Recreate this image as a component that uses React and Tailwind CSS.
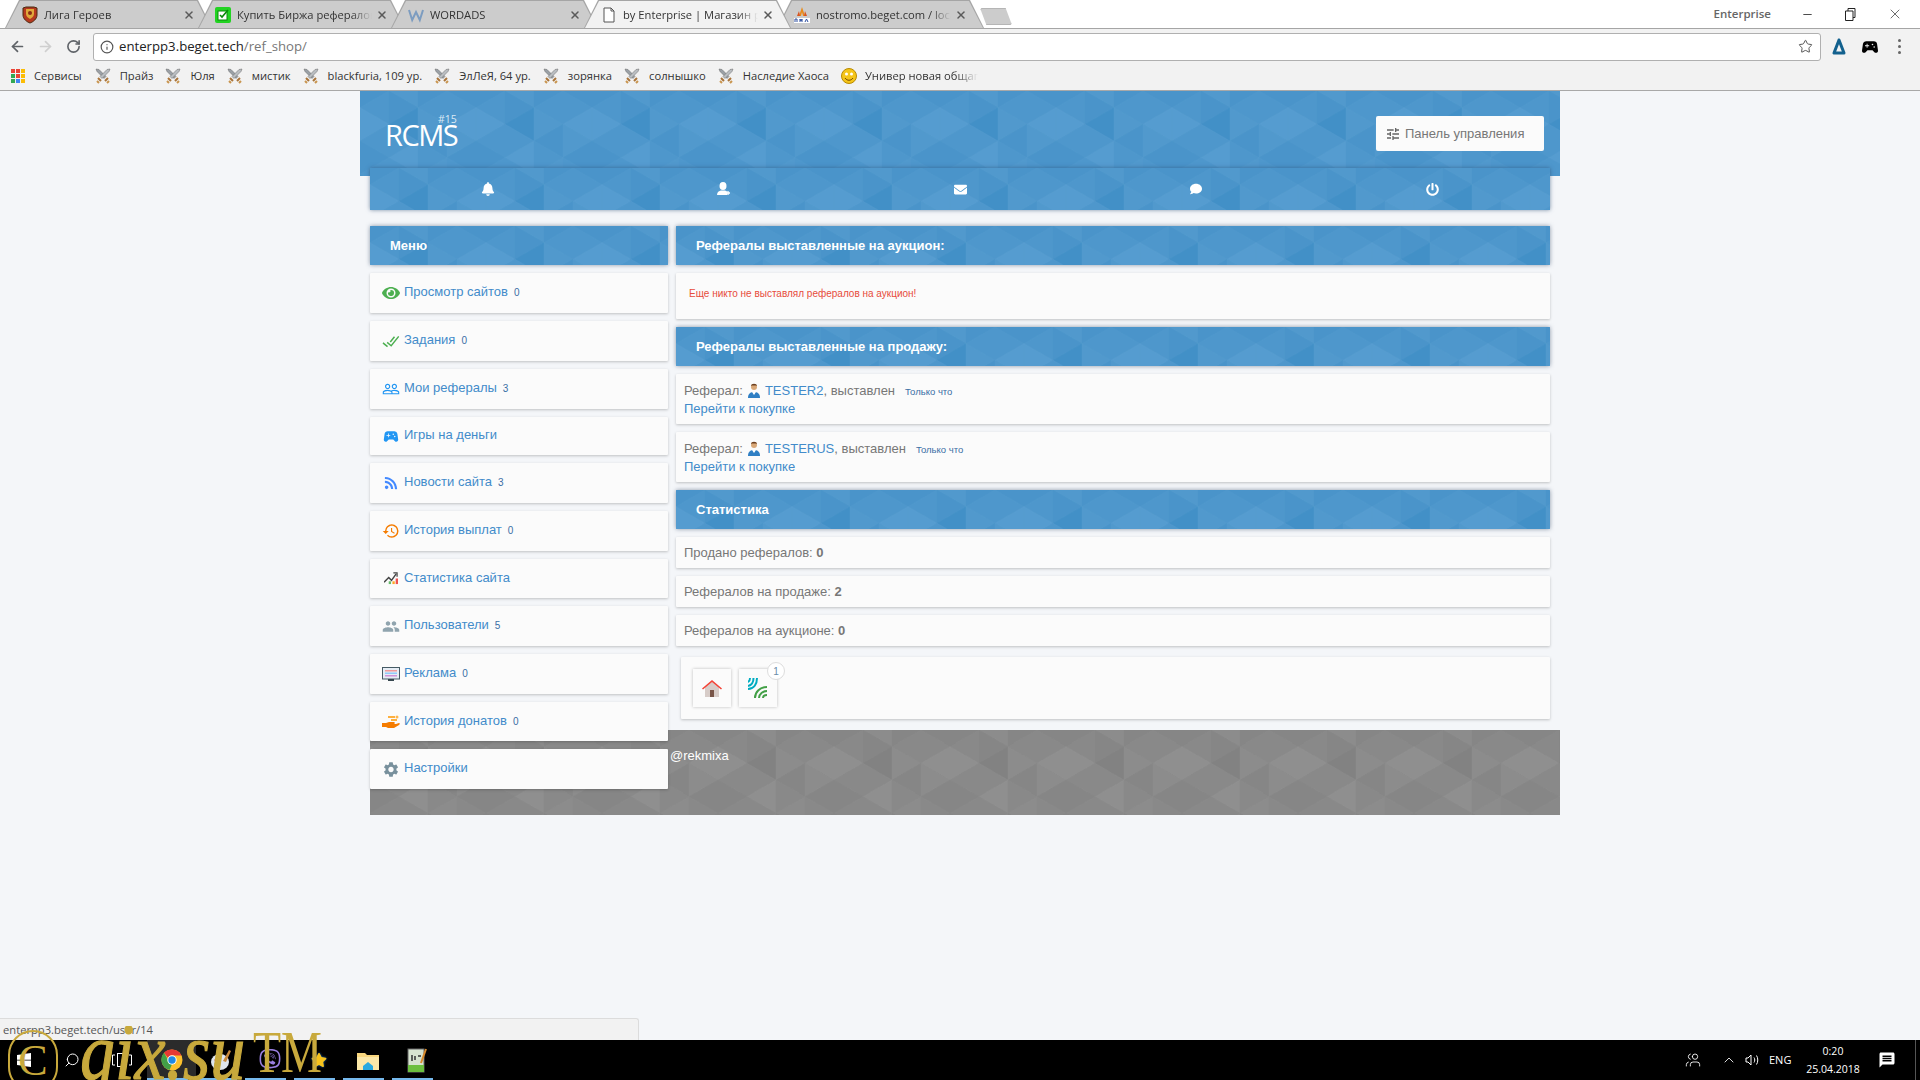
import React, { useId } from "react";
import { FaBell, FaEnvelope, FaComment, FaPowerOff, FaEye, FaRss, FaWindows, FaViber, FaStar } from "react-icons/fa";
import { MdHistory, MdPeople, MdPeopleOutline, MdTune, MdSettings, MdDoneAll, MdMessage, MdSportsEsports } from "react-icons/md";
import { ArrowLeft, ArrowRight, RotateCw, Info, Star, X, Minus, Search, ChevronUp, Users } from "lucide-react";

const TONES = {
  blue: ["#4290c7", "#4a94ca", "#4e97cc", "#5199cd", "#559cd0"],
  gray: ["#828282", "#868686", "#898989", "#8c8c8c", "#8f8f8f"],
};
const TABLE = [
  [1, 2, 4, 2, 1, 2],
  [3, 1, 0, 2, 4, 2],
  [1, 2, 3, 1, 2, 3],
  [1, 2, 4, 3, 1, 2],
];
const CW = 29;
const RH = 100 / 6;

function triangles(tone) {
  const out = [];
  for (let c = 0; c < 4; c++) {
    for (let m = 0; m <= 6; m++) {
      const s = TONES[tone][TABLE[c][m % 6]];
      const x0 = c * CW;
      const x1 = (c + 1) * CW;
      const pts = (c + m) % 2 === 1
        ? `${x0},${m * RH} ${x1},${(m - 1) * RH} ${x1},${(m + 1) * RH}`
        : `${x1},${m * RH} ${x0},${(m - 1) * RH} ${x0},${(m + 1) * RH}`;
      out.push(<polygon key={`${c}-${m}`} points={pts} fill={s} stroke={s} strokeWidth="0.4" />);
    }
  }
  return out;
}

function Pattern({ tone }) {
  const id = "p" + useId().replace(/[^a-zA-Z0-9]/g, "");
  return (
    <svg className="absolute inset-0 w-full h-full" aria-hidden="true">
      <defs>
        <pattern id={id} width="116" height="100" patternUnits="userSpaceOnUse">{triangles(tone)}</pattern>
      </defs>
      <rect width="100%" height="100%" fill={`url(#${id})`} />
    </svg>
  );
}

function BluePanel({ title }) {
  return (
    <div className="relative overflow-hidden h-[39px] shrink-0 bg-[#4d96cb] rounded-[1px] shadow-[0_0_4px_rgba(50,70,100,0.55)] flex items-center">
      <Pattern tone="blue" />
      <span className="relative pl-[20px] text-[13px] font-bold text-white">{title}</span>
    </div>
  );
}

const Card = ({ className = "", children }) => (
  <div className={`shrink-0 bg-[#fbfbfb] rounded-[1px] shadow-[0_1px_3px_rgba(0,0,0,0.22)] ${className}`}>{children}</div>
);

function Sword() {
  return (
    <svg width="16" height="16" viewBox="0 0 16 16" className="shrink-0">
      <path d="M1 1l3 .5 7 7-2 2-7-7z" fill="#9aa0a6" stroke="#666" strokeWidth=".5" />
      <path d="M15 1l-3 .5-7 7 2 2 7-7z" fill="#b9bdc1" stroke="#666" strokeWidth=".5" />
      <path d="M3 10l3 3M13 10l-3 3" stroke="#a9743a" strokeWidth="2" />
      <path d="M2 13l2 2M14 13l-2 2" stroke="#c9954f" strokeWidth="2" />
    </svg>
  );
}

function Apps() {
  const c = ["#ea4335", "#ea4335", "#fbbc05", "#34a853", "#ea4335", "#fbbc05", "#34a853", "#4285f4", "#fbbc05"];
  return (
    <svg width="14" height="14" viewBox="0 0 14 14" className="shrink-0">
      {c.map((f, i) => <rect key={i} x={(i % 3) * 5} y={Math.floor(i / 3) * 5} width="4" height="4" fill={f} />)}
    </svg>
  );
}

const Shield = () => (
  <svg width="16" height="18" viewBox="0 0 16 18"><path d="M1 2l3-1h8l3 1v7c0 4-4 7-7 8-3-1-7-4-7-8z" fill="#b5391f" stroke="#4a2a10" /><path d="M4 3h8v5c0 2-2 4-4 5-2-1-4-3-4-5z" fill="#e0a93a" /><circle cx="8" cy="7" r="2" fill="#8a2b14" /></svg>
);
const GreenCheck = () => (
  <svg width="16" height="16" viewBox="0 0 16 16"><rect width="16" height="16" rx="2" fill="#22d322" /><rect x="3" y="4" width="9" height="9" fill="#fff" stroke="#0a8a0a" /><path d="M5 8l2 2 6-7" stroke="#0a8a0a" strokeWidth="1.6" fill="none" /></svg>
);
const WLogo = () => (
  <svg width="16" height="16" viewBox="0 0 16 16"><path d="M1 3l3.2 10L8 5l3.8 8L15 3" stroke="#7c9cc0" strokeWidth="2" fill="none" /></svg>
);
const PageIcon = () => (
  <svg width="14" height="16" viewBox="0 0 14 16"><path d="M2 1h7l3 3v11H2z" fill="#fff" stroke="#555" /><path d="M9 1v3h3" fill="none" stroke="#555" /></svg>
);
const Rma = () => (
  <svg width="16" height="16" viewBox="0 0 16 16"><path d="M8 0l3 9H9L8 5 7 9H5z" fill="#e88a1a" /><path d="M3 9l2-5 1 5zM13 9l-2-5-1 5z" fill="#d9541e" /><rect x="0" y="11" width="16" height="5" fill="#fff" /><path d="M1 15v-3h2v3M6 15v-3l1 2 1-2v3M11 15l1.5-3 1.5 3" stroke="#2d4ea0" fill="none" /></svg>
);

function Tab({ icon, title, active, first }) {
  return (
    <div className={`relative h-[28px] w-[207px] ${first ? "" : "-ml-[14px]"} ${active ? "z-10" : ""}`}>
      <div className="absolute inset-0 bg-[#a5a5a5] [clip-path:polygon(0_100%,14px_0,calc(100%-14px)_0,100%_100%)]" />
      <div className={`absolute left-[1px] right-[1px] top-[1px] bottom-0 ${active ? "bg-[#f2f2f2]" : "bg-[#cccccc]"} [clip-path:polygon(0_100%,14px_0,calc(100%-14px)_0,100%_100%)]`} />
      <div className="relative h-full flex items-center pt-[2px] pl-[17px] pr-[17px]">
        <span className="w-[16px] flex justify-center shrink-0">{icon}</span>
        <span className="ml-[6px] flex-1 overflow-hidden whitespace-nowrap text-[11.200px] text-[#333] [mask-image:linear-gradient(to_right,black_85%,transparent)]">{title}</span>
        <X size={12} strokeWidth={3} className="ml-[4px] text-[#5a5a5a] shrink-0" />
      </div>
    </div>
  );
}

const BOOKMARKS = ["Прайз", "Юля", "мистик", "blackfuria, 109 ур.", "ЭлЛеЯ, 64 ур.", "зорянка", "солнышко", "Наследие Хаоса"];

function Chrome() {
  return (
    <div className="h-[91px] shrink-0 flex flex-col font-['Open_Sans',sans-serif]">
      <div className="h-[29px] bg-white border-b border-[#a5a5a5] flex items-start pl-[5px] relative">
        <div className="flex h-[28px]">
          <Tab first icon={<Shield />} title="Лига Героев" />
          <Tab icon={<GreenCheck />} title="Купить Биржа рефералов" />
          <Tab icon={<WLogo />} title="WORDADS" />
          <Tab active icon={<PageIcon />} title="by Enterprise | Магазин рефералов" />
          <Tab icon={<Rma />} title="nostromo.beget.com / localhost" />
          <div className="-ml-[4px] mt-[8px] w-[32px] h-[17px] bg-[#cccccc] border border-[#b5b5b5] rounded-[2px] [clip-path:polygon(0_0,80%_0,100%_100%,20%_100%)]" />
        </div>
        <div className="ml-auto flex items-center h-[28px] text-[#222]">
          <span className="text-[11.500px] text-[#666] font-semibold mr-[30px]">Enterprise</span>
          <Minus size={13} strokeWidth={1.5} className="mr-[31px]" />
          <svg width="11" height="13" viewBox="0 0 11 13" className="mr-[31px]"><path d="M3 3V.5h7v9H8M.5 3h7.5v9.500H.500z" fill="none" stroke="#222" /></svg>
          <X size={16} strokeWidth={1} className="mr-[17px]" />
        </div>
      </div>
      <div className="h-[33px] pt-[2px] bg-[#f2f2f2] flex items-center pl-[9px]">
        <ArrowLeft size={17} strokeWidth={2.4} className="text-[#5f6368]" />
        <ArrowRight size={17} strokeWidth={2.4} className="ml-[11px] text-[#cfcfcf]" />
        <RotateCw size={15} strokeWidth={2.6} className="ml-[12px] text-[#5f6368]" />
        <div className="ml-[12px] w-[1728px] h-[28px] bg-white border border-[#b0b0b0] rounded-[3px] flex items-center pl-[6px] pr-[7px]">
          <Info size={14} strokeWidth={2} className="text-[#555]" />
          <span className="ml-[5px] text-[13.200px] text-[#222]">enterpp3.beget.tech<span className="text-[#777]">/ref_shop/</span></span>
          <Star size={15} strokeWidth={1.6} className="ml-auto text-[#555]" />
        </div>
        <svg width="14" height="18" viewBox="0 0 14 18" className="ml-[11px]"><path d="M7 2L2 15h10z" fill="none" stroke="#13618e" strokeWidth="3" strokeLinejoin="round" /></svg>
        <MdSportsEsports size={20} className="ml-[14px] text-black" />
        <div className="ml-[18px] flex flex-col gap-[3px]">
          <span className="w-[3px] h-[3px] bg-[#666] rounded-full" />
          <span className="w-[3px] h-[3px] bg-[#666] rounded-full" />
          <span className="w-[3px] h-[3px] bg-[#666] rounded-full" />
        </div>
      </div>
      <div className="h-[29px] bg-[#f2f2f2] border-b border-[#a8a8a8] flex items-center pl-[11px] text-[11.200px] text-[#333]">
        <Apps />
        <span className="ml-[9px] mr-[13px]">Сервисы</span>
        {BOOKMARKS.map((t) => (
          <React.Fragment key={t}>
            <Sword />
            <span className="ml-[9px] mr-[12px] whitespace-nowrap">{t}</span>
          </React.Fragment>
        ))}
        <svg width="16" height="16" viewBox="0 0 16 16" className="shrink-0"><circle cx="8" cy="8" r="7.500" fill="#f5c518" stroke="#b88a00" /><circle cx="5.500" cy="6" r="1.500" fill="#fff" /><circle cx="10.500" cy="6" r="1.500" fill="#fff" /><path d="M4 10c2 3 6 3 8 0" stroke="#7a4a00" fill="none" /></svg>
        <span className="ml-[8px] w-[113px] overflow-hidden whitespace-nowrap [mask-image:linear-gradient(to_right,black_80%,transparent)]">Универ новая общага</span>
      </div>
    </div>
  );
}

const UserPlus = () => (
  <svg width="14" height="14" viewBox="0 0 14 14" fill="#fff"><ellipse cx="6" cy="4" rx="3.500" ry="4" /><path d="M0 13c0-3 2-4 4-4.500h4c1 .2 1.500.5 2 1V13z" /><path d="M11 9v4M9 11h4" stroke="#fff" strokeWidth="1.300" /></svg>
);

const Monitor = () => (
  <svg width="18" height="15" viewBox="0 0 18 15"><rect x=".5" y=".5" width="17" height="11.500" fill="#e6edf5" stroke="#455a64" /><rect x="3" y="3" width="12" height="1.500" fill="#ef9a9a" /><rect x="3" y="5.500" width="12" height="1.500" fill="#90caf9" /><rect x="3" y="8" width="12" height="1.500" fill="#ce93d8" /><rect x="6" y="12" width="6" height="2" fill="#37474f" /></svg>
);
const Donate = () => (
  <svg width="18" height="16" viewBox="0 0 18 16"><path d="M0 9h4l3-1h5c1 0 1 2 0 2H9h5l3-1c1 0 1 1 0 2l-5 3H6l-2-1H0z" fill="#f57c00" /><path d="M6 3h7M9 6h6" stroke="#ff9800" strokeWidth="1.500" /><circle cx="15" cy="3" r="1.500" fill="#ffb74d" /></svg>
);
const StatIcon = () => (
  <svg width="15" height="13" viewBox="0 0 16 14"><path d="M0 11l5-5 3 3 5-7" stroke="#444" strokeWidth="1.500" fill="none" /><path d="M10 1h4v4" stroke="#444" strokeWidth="1.300" fill="none" /><rect x="5" y="10" width="2.500" height="3" fill="#66bb6a" /><rect x="9" y="10" width="2.500" height="3" fill="#ffa726" /><rect x="12.500" y="7" width="2.500" height="6" fill="#ef5350" /></svg>
);

const MENU = [
  { t: "Просмотр сайтов", n: "0", h: "h-[40px]", icon: <FaEye size={18} className="text-[#4caf50]" /> },
  { t: "Задания", n: "0", h: "h-[40px]", icon: <MdDoneAll size={19} className="text-[#4caf50] -rotate-6" /> },
  { t: "Мои рефералы", n: "3", h: "h-[40px]", icon: <MdPeopleOutline size={20} className="text-[#2196f3]" /> },
  { t: "Игры на деньги", n: "", h: "h-[38px]", icon: <MdSportsEsports size={19} className="text-[#2196f3]" /> },
  { t: "Новости сайта", n: "3", h: "h-[40px]", icon: <FaRss size={14} className="text-[#448aff]" /> },
  { t: "История выплат", n: "0", h: "h-[40px]", icon: <MdHistory size={18} className="text-[#f57c00]" /> },
  { t: "Статистика сайта", n: "", h: "h-[39px]", icon: <StatIcon /> },
  { t: "Пользователи", n: "5", h: "h-[40px]", icon: <MdPeople size={19} className="text-[#90a4ae]" /> },
  { t: "Реклама", n: "0", h: "h-[40px]", icon: <Monitor /> },
  { t: "История донатов", n: "0", h: "h-[39px]", icon: <Donate /> },
  { t: "Настройки", n: "", h: "h-[40px]", icon: <MdSettings size={19} className="text-[#78909c]" /> },
];

function Sidebar() {
  return (
    <div className="w-[298px] shrink-0 relative z-10 flex flex-col gap-[8px]">
      <BluePanel title="Меню" />
      {MENU.map((m) => (
        <Card key={m.t} className={`${m.h} flex items-center pl-[12px]`}>
          <span className="w-[18px] h-[18px] flex items-center justify-center shrink-0">{m.icon}</span>
          <span className="ml-[4px] -mt-[2px] text-[13px] text-[#428bca]">{m.t}</span>
          {m.n && <span className="ml-[6px] -mt-[1px] text-[10px] text-[#3a6ea5]">{m.n}</span>}
        </Card>
      ))}
    </div>
  );
}

const Avatar = () => (
  <svg width="12" height="16" viewBox="0 0 12 16" className="inline-block mx-[5px] align-[-4px]"><circle cx="6" cy="4" r="3" fill="#d9a878" /><path d="M3 3c0-3 6-3 6 0l-1-.500H4z" fill="#6d3f1e" /><path d="M0 15c0-5 3-6 6-6s6 1 6 6z" fill="#2f7fc4" /><path d="M4 9l2 3 2-3z" fill="#fff" /></svg>
);

function RefRow({ name }) {
  return (
    <Card className="h-[50px] pl-[8px] pt-[8px] text-[13px] leading-[18px] text-[#777]">
      <div className="h-[18px]">
        Реферал:<Avatar /><span className="text-[#428bca]">{name}</span>, выставлен
        <span className="ml-[10px] text-[9.500px] text-[#3a6ea5]">Только что</span>
      </div>
      <div className="text-[#428bca]">Перейти к покупке</div>
    </Card>
  );
}

const Stat = ({ label, v }) => (
  <Card className="h-[31px] flex items-center pl-[8px] text-[13px] text-[#777]">
    <span>{label}: <b className="font-bold">{v}</b></span>
  </Card>
);

function Right() {
  return (
    <div className="flex-1 flex flex-col gap-[8px]">
      <BluePanel title="Рефералы выставленные на аукцион:" />
      <Card className="h-[46px] pl-[13px] pt-[14px] text-[10px] leading-[13px] text-[#e74c3c]">Еще никто не выставлял рефералов на аукцион!</Card>
      <BluePanel title="Рефералы выставленные на продажу:" />
      <RefRow name="TESTER2" />
      <RefRow name="TESTERUS" />
      <BluePanel title="Статистика" />
      <Stat label="Продано рефералов" v="0" />
      <Stat label="Рефералов на продаже" v="2" />
      <Stat label="Рефералов на аукционе" v="0" />
      <Card className="ml-[5px] mt-[3px] h-[62px] flex items-center gap-[8px] pl-[12px]">
        <div className="w-[38px] h-[38px] bg-[#fbfbfb] shadow-[0_0_3px_rgba(0,0,0,0.25)] flex items-center justify-center">
          <svg width="20" height="18" viewBox="0 0 20 18"><path d="M3 8L10 2l7 6v10H3z" fill="#d7ccc8" /><rect x="8" y="11" width="4" height="7" fill="#795548" /><path d="M0 9.500L10 1l10 8.500-1 1L10 3l-9 7.500z" fill="#f44336" /></svg>
        </div>
        <div className="relative w-[38px] h-[38px] bg-[#fbfbfb] shadow-[0_0_3px_rgba(0,0,0,0.25)] flex items-center justify-center">
          <svg width="20" height="20" viewBox="0 0 20 20" fill="none" strokeWidth="2"><path d="M2 0c0 2 0 3-2 4" stroke="#00acc1" /><path d="M5.500 0c0 4-1 7-5.500 8" stroke="#00acc1" /><path d="M9 0c0 6-3 11-9 11" stroke="#00acc1" /><path d="M7 20c0-6 5-11 12-11" stroke="#43a047" /><path d="M11 20c0-4 4-7 8-7" stroke="#43a047" /><path d="M15 20c0-2 2-3 4-3" stroke="#43a047" /></svg>
          <span className="absolute -top-[7px] -right-[8px] w-[18px] h-[18px] rounded-full bg-white border border-[#ddd] flex items-center justify-center text-[10px] text-[#6a8ca8]">1</span>
        </div>
      </Card>
    </div>
  );
}

function Page() {
  return (
    <div className="relative flex-1 bg-[#f4f6f9] font-['Liberation_Sans',sans-serif] overflow-hidden">
      <div className="w-[1200px] mx-auto">
        <div className="relative overflow-hidden h-[85px] bg-[#4d96cb] flex items-start">
          <Pattern tone="blue" />
          <div className="relative ml-[25px] mt-[20px] w-[80px] h-[40px] font-['Open_Sans',sans-serif] text-white">
            <div className="text-[29px] leading-[34px] tracking-[-1.500px] mt-[7px]">RCMS</div>
            <div className="absolute left-[53px] top-[2px] text-[10.500px] leading-[12px] text-[#dbe9f5]">#15</div>
          </div>
          <div className="relative ml-auto mr-[16px] mt-[25px] w-[168px] h-[35px] bg-[#fbfbfb] rounded-[2px] flex items-center pl-[9px] text-[13px] text-[#777]">
            <MdTune size={16} className="text-[#666]" />
            <span className="ml-[4px]">Панель управления</span>
          </div>
        </div>
        <div className="relative overflow-hidden z-10 mx-[10px] -mt-[8px] h-[42px] bg-[#4d96cb] shadow-[0_0_4px_rgba(40,70,110,0.6)] grid grid-cols-5">
          <Pattern tone="blue" />
          {[<FaBell size={14} />, <UserPlus />, <FaEnvelope size={13} />, <FaComment size={12} />, <FaPowerOff size={13} />].map((ic, i) => (
            <div key={i} className="relative flex items-center justify-center text-white">{ic}</div>
          ))}
        </div>
        <div className="mt-[16px] ml-[10px] mr-[10px] flex gap-[8px] h-[504px]">
          <Sidebar />
          <Right />
        </div>
        <div className="relative overflow-hidden ml-[10px] h-[85px] bg-[#898989]">
          <Pattern tone="gray" />
          <div className="relative pl-[300px] pt-[17px] text-[13px] leading-[18px] font-medium text-white">@rekmixa</div>
        </div>
      </div>
      <div className="absolute left-0 bottom-0 w-[639px] h-[22px] bg-[#f2f2f2] border-t border-r border-[#dcdcdc] rounded-tr-[3px] pl-[3px] text-[11.200px] leading-[21px] text-[#555] font-['Open_Sans',sans-serif]">enterpp3.beget.tech/user/14</div>
    </div>
  );
}

function TaskBtn({ children, active, line }) {
  return (
    <div className={`relative w-[49px] h-[40px] flex items-center justify-center ${active ? "bg-[#2b2b2b]" : ""}`}>
      {children}
      {line && <span className="absolute bottom-0 left-[0px] right-[8px] h-[2px] bg-[#76b9ed]" />}
    </div>
  );
}

function Taskbar() {
  return (
    <div className="relative h-[40px] shrink-0 bg-black flex items-center text-white font-['Open_Sans',sans-serif]">
      <div className="w-[48px] flex justify-center"><FaWindows size={16} /></div>
      <div className="w-[48px] flex justify-center"><Search size={16} strokeWidth={1.5} className="-scale-x-100" /></div>
      <div className="w-[51px] flex justify-center"><svg width="20" height="14" viewBox="0 0 20 14" fill="none" stroke="#fff"><rect x="5.500" y=".5" width="9" height="13" /><path d="M3 2H.5v10H3M17 2h2.500v10H17" /></svg></div>
      <TaskBtn active line>
        <svg width="22" height="22" viewBox="0 0 22 22"><circle cx="11" cy="11" r="10.500" fill="#fbc02d" /><path d="M11 .5a10.500 10.500 0 0 1 9.500 6H11a4.500 4.500 0 0 0-4 2.500L3 3.800A10.500 10.500 0 0 1 11 .5z" fill="#e53935" /><path d="M3 3.800L7.500 11.500a4.500 4.500 0 0 0 4 2.500l-3 7A10.500 10.500 0 0 1 3 3.800z" fill="#43a047" /><circle cx="11" cy="11" r="4.700" fill="#fff" /><circle cx="11" cy="11" r="3.700" fill="#1e88e5" /></svg>
      </TaskBtn>
      <TaskBtn line>
        <svg width="22" height="22" viewBox="0 0 22 22"><ellipse cx="10" cy="13" rx="9" ry="8" fill="#dfe6ee" /><circle cx="6" cy="11" r="1.500" fill="#e53935" /><circle cx="9" cy="8" r="1.500" fill="#43a047" /><circle cx="6" cy="15" r="1.500" fill="#1e88e5" /><path d="M13 12L19 1l2 1-5 11z" fill="#c98a3c" /></svg>
      </TaskBtn>
      <TaskBtn line><FaViber size={22} className="text-[#9a7fe0]" /></TaskBtn>
      <TaskBtn line><FaStar size={16} className="text-[#f6c21c] [filter:drop-shadow(0_0_1px_#1565c0)]" /></TaskBtn>
      <TaskBtn line>
        <svg width="22" height="20" viewBox="0 0 22 20"><path d="M0 3h8l2 2h12v15H0z" fill="#f9d77e" /><rect x="0" y="7" width="22" height="13" fill="#fce8a8" /><path d="M6 20v-4l5-4 5 4v4z" fill="#29a9e0" /></svg>
      </TaskBtn>
      <TaskBtn line>
        <svg width="20" height="26" viewBox="0 0 20 26"><rect x="1" y="2" width="16" height="23" fill="#d7e3d0" stroke="#666" /><rect x="1" y="18" width="16" height="7" fill="#6cbf3f" /><path d="M5 8v6M8 9v4M11 9h3" stroke="#333" strokeWidth="1.500" /><path d="M14 16L19 2" stroke="#d98a2b" strokeWidth="2" /></svg>
      </TaskBtn>
      <div className="ml-auto flex items-center h-full">
        <Users size={16} strokeWidth={1.3} className="mr-[20px] -scale-x-100" />
        <ChevronUp size={16} strokeWidth={1.3} className="mr-[8px]" />
        <svg width="16" height="14" viewBox="0 0 16 14" fill="none" stroke="#fff" className="mr-[8px]"><path d="M1 5h2l3-3v10L3 9H1zM9 4.500c1 1.500 1 3.500 0 5M11.500 2.500c1.700 2.500 1.700 6.500 0 9" /></svg>
        <span className="text-[11px] w-[26px] mr-[3px]">ENG</span>
        <div className="w-[70px] text-center text-[10.500px] leading-[18px] mr-[10px]">
          <div>0:20</div>
          <div>25.04.2018</div>
        </div>
        <MdMessage size={18} className="mr-[19px]" />
        <span className="w-[1px] h-full bg-[#555] mr-[4px]" />
      </div>
    </div>
  );
}

function Watermark() {
  return (
    <div className="absolute left-0 bottom-0 w-[340px] h-[54px] overflow-hidden pointer-events-none text-[#c8a93c] font-['Liberation_Serif',serif]">
      <span className="absolute left-[8px] top-[4px] w-[50px] h-[62px] rounded-full border-[2px] border-[#c8a93c] flex items-center justify-center text-[44px] leading-none">C</span>
      <span className="absolute left-[80px] -top-[8px] text-[70px] leading-[70px] italic whitespace-nowrap [-webkit-text-stroke:1px_#c8a93c] scale-y-[1.15]">gix.su</span>
      <span className="absolute left-[253px] -top-[3px] text-[46px] leading-[45px] whitespace-nowrap origin-top scale-y-[1.3]">TM</span>
    </div>
  );
}

export default function App() {
  return (
    <div className="relative w-[1920px] h-[1080px] overflow-hidden flex flex-col">
      <Chrome />
      <Page />
      <Taskbar />
      <Watermark />
    </div>
  );
}
